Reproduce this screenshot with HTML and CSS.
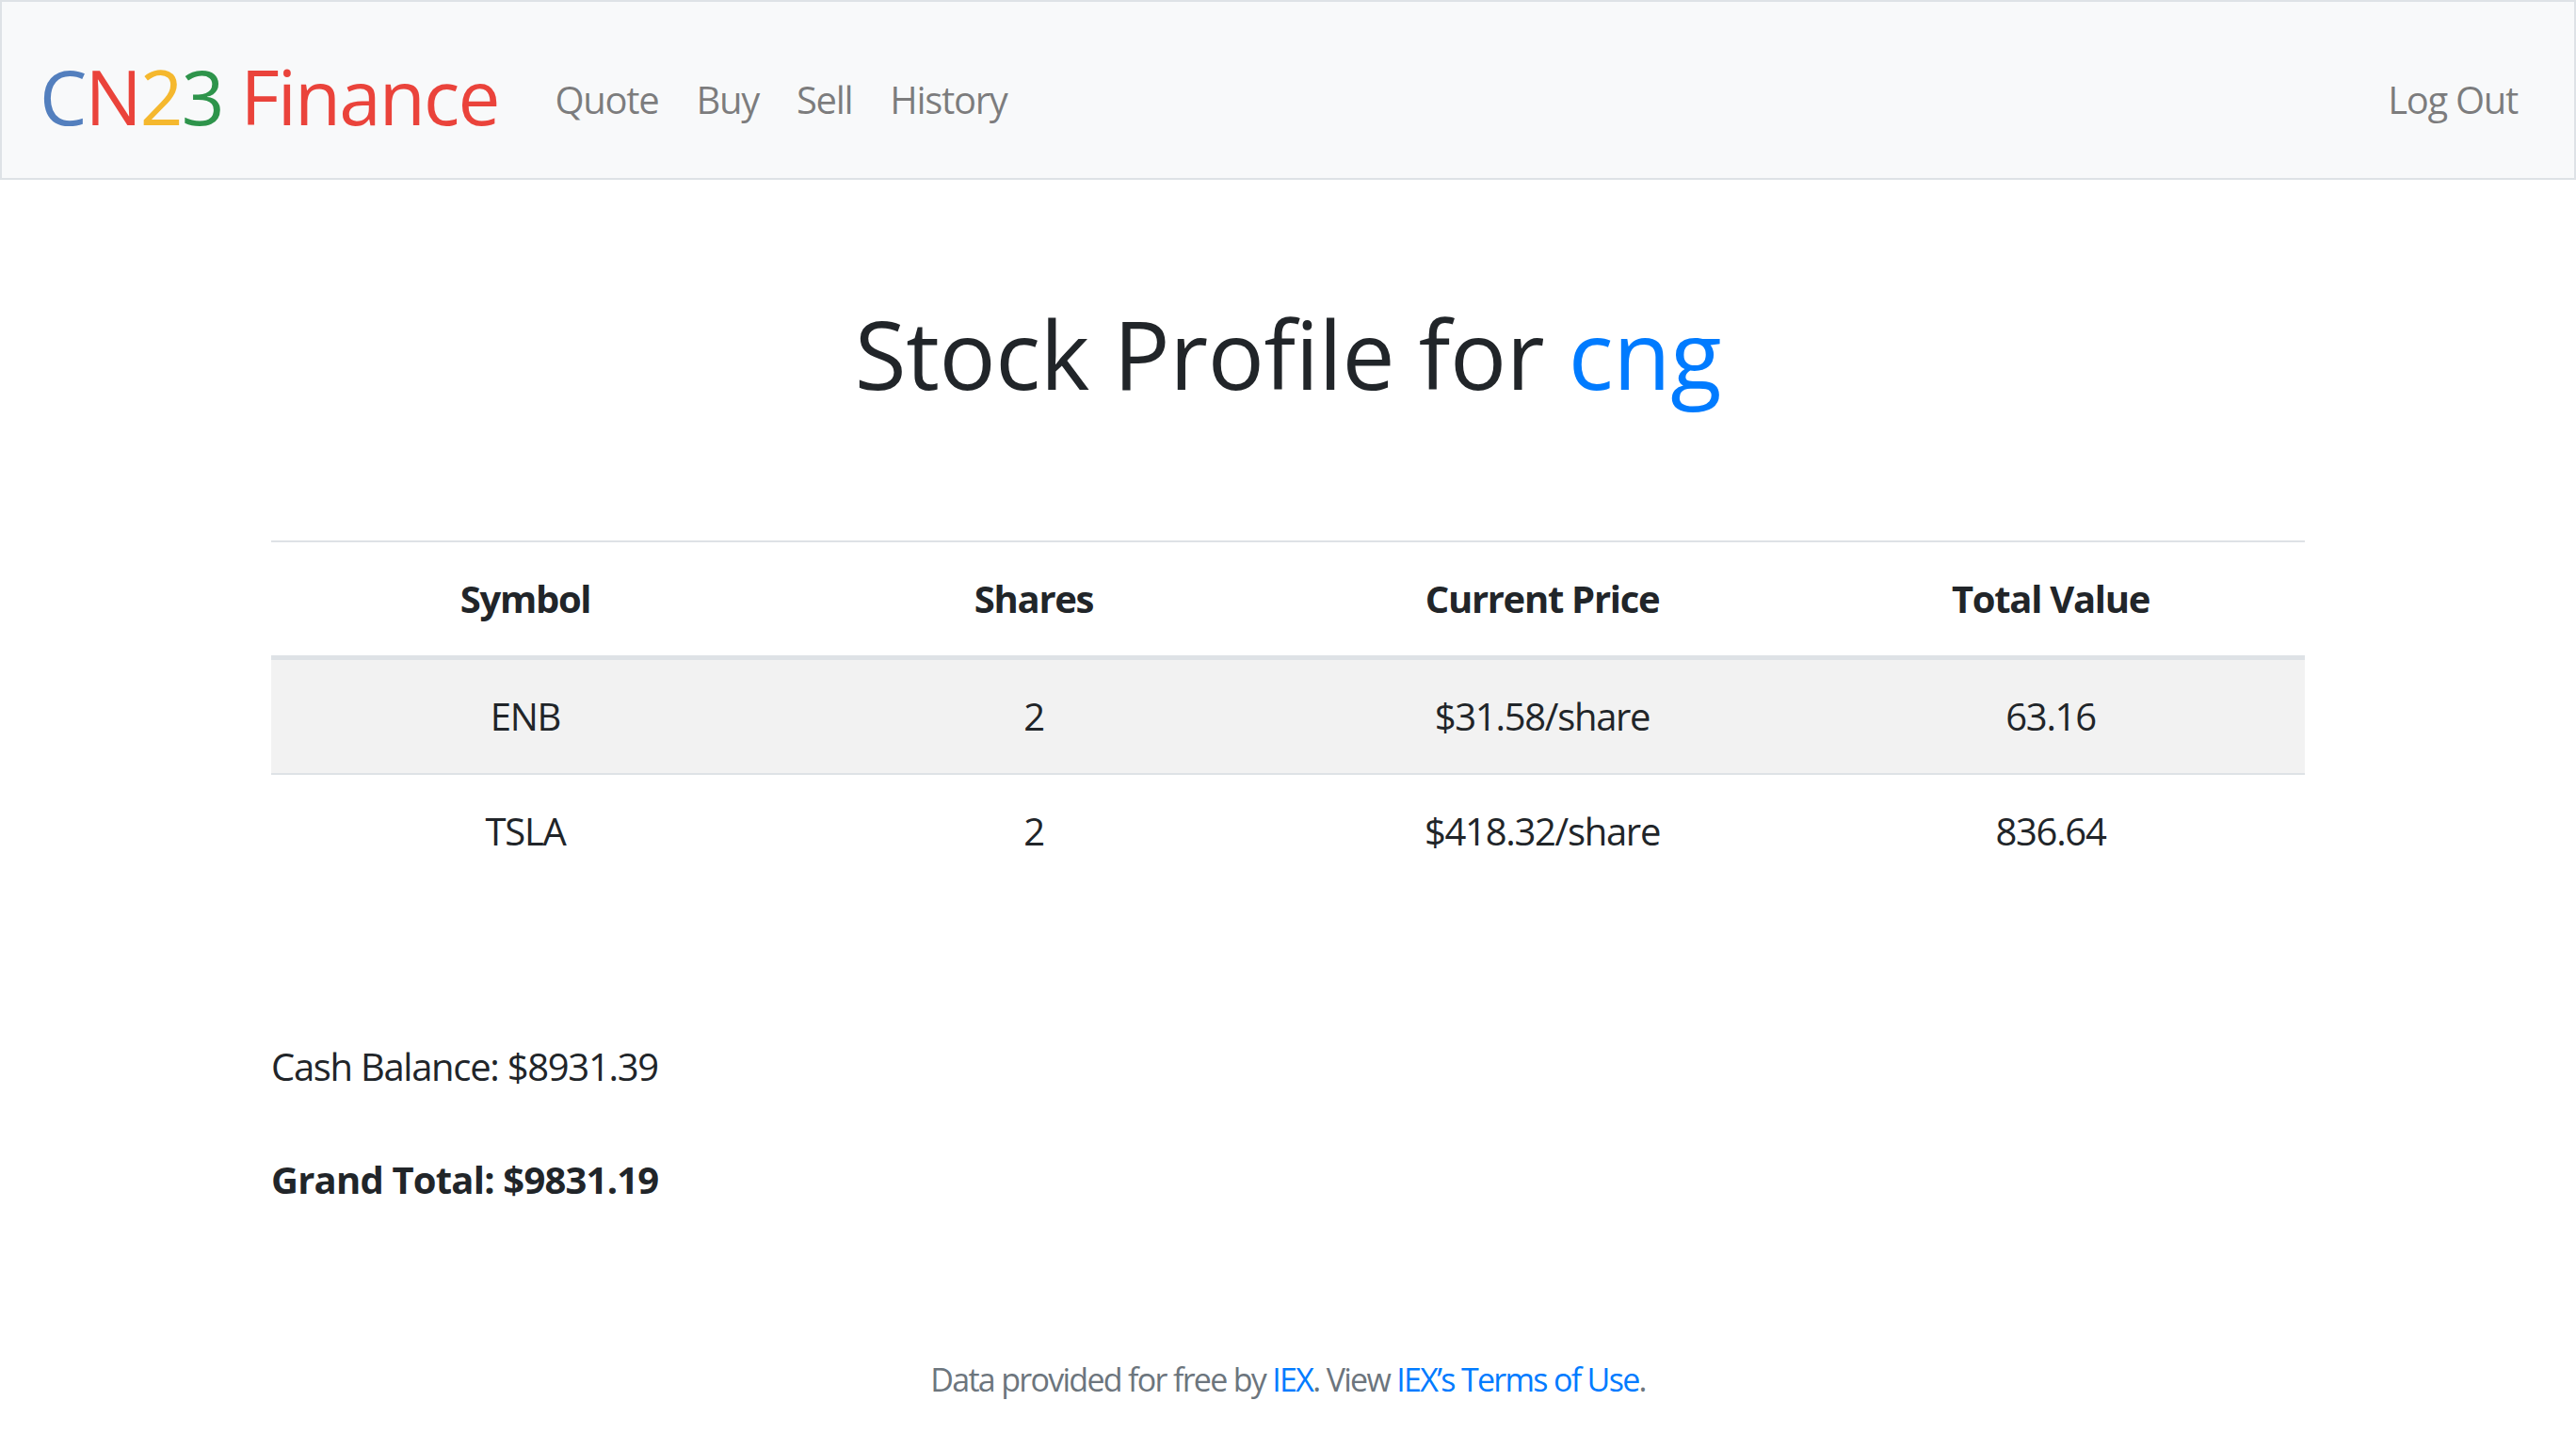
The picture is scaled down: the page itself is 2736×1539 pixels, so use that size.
FILE: index.html
```html
<!DOCTYPE html>
<html lang="en">
<head>
<meta charset="utf-8">
<title>CN23 Finance: Portfolio</title>
<link rel="stylesheet" href="styles.css">
</head>
<body>
<nav class="navbar">
  <a class="brand" href="#"><span class="blue">C</span><span class="red">N</span><span class="yellow">2</span><span class="green">3</span> <span class="red">Finance</span></a>
  <ul class="nav-main">
    <li><a class="nav-link" href="#">Quote</a></li>
    <li><a class="nav-link" href="#">Buy</a></li>
    <li><a class="nav-link" href="#">Sell</a></li>
    <li><a class="nav-link" href="#">History</a></li>
  </ul>
  <ul class="nav-right">
    <li><a class="nav-link" href="#">Log Out</a></li>
  </ul>
</nav>
<main class="main">
  <h1 class="title">Stock Profile for <span class="user">cng</span></h1>
  <table class="holdings">
    <thead>
      <tr><th>Symbol</th><th>Shares</th><th>Current Price</th><th>Total Value</th></tr>
    </thead>
    <tbody>
      <tr class="striped"><td>ENB</td><td>2</td><td>$31.58/share</td><td>63.16</td></tr>
      <tr><td>TSLA</td><td>2</td><td>$418.32/share</td><td>836.64</td></tr>
    </tbody>
  </table>
  <div class="summary">
    <p class="cash">Cash Balance: $8931.39</p>
    <p class="grand">Grand Total: $9831.19</p>
  </div>
</main>
<footer class="footer">
  Data provided for free by <a href="#">IEX</a>. View <a href="#">IEX’s Terms of Use</a>.
</footer>
</body>
</html>
```
FILE: styles.css
```css
html, body {
  margin: 0;
  padding: 0;
  height: 100%;
  overflow: hidden;
}
body {
  font-family: "Open Sans", "Noto Sans", sans-serif;
  font-size: 40px;
  line-height: 1.5;
  color: #212529;
  background: #fff;
  letter-spacing: -1.3px;
}
a { text-decoration: none; }

.navbar {
  display: flex;
  align-items: center;
  background: #f8f9fa;
  border: 2px solid #dee2e6;
  box-sizing: border-box;
  height: 191px;
  padding: 0 40px;
}
.brand {
  font-size: 80px;
  line-height: 1.5;
  margin-right: 40px;
  padding-top: 12px;
  letter-spacing: -1.9px;
}
.blue { color: #537fbe; }
.red { color: #ea433b; }
.yellow { color: #f5b82e; }
.green { color: #2e944b; }

.nav-main, .nav-right {
  list-style: none;
  margin: 0;
  padding: 0;
  display: flex;
}
.nav-right { margin-left: auto; }
.nav-link {
  display: block;
  padding: 21px 20px 0;
  color: rgba(0, 0, 0, 0.5);
}

.main {
  padding: 120px 288px 0;
}
.title {
  margin: 0;
  font-size: 100px;
  font-weight: 500;
  line-height: 1.2;
  text-align: center;
  padding-top: 4px;
  letter-spacing: -0.4px;
}
.user { color: #007bff; }

.holdings {
  width: 100%;
  table-layout: fixed;
  border-collapse: collapse;
  margin-top: 139px;
  text-align: center;
}
.holdings th, .holdings td {
  padding: 30px 12px;
  border-top: 2px solid #dee2e6;
  vertical-align: top;
}
.holdings th {
  font-weight: 700;
  border-bottom: 5px solid #dee2e6;
}
.holdings .striped { background: rgba(0, 0, 0, 0.05); }

.summary {
  padding-top: 160px;
}
.summary p { margin: 0; }
.cash { margin-bottom: 60px !important; }
.grand { font-weight: 700; letter-spacing: -0.8px; }

.footer {
  text-align: center;
  font-size: 34px;
  color: #6c757d;
  padding-top: 157px;
  letter-spacing: -1.7px;
}
.footer a { color: #007bff; }
```
